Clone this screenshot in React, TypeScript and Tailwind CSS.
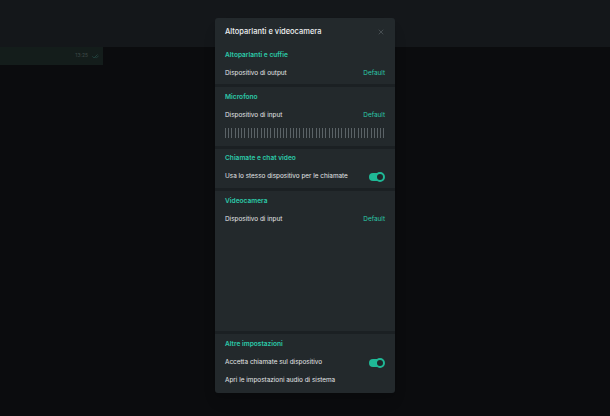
import React from 'react';
import { X, CheckCheck } from 'lucide-react';

function Toggle() {
  return (
    <div className="relative w-[15px] h-[8px] rounded-full bg-[#1fb896] mr-[1px]">
      <div className="absolute right-[-1px] top-[-1px] w-[10px] h-[10px] rounded-full bg-[#1f2629] border-[2px] border-[#1fb896]" />
    </div>
  );
}

function Row({ label, right }: { label: string; right?: React.ReactNode }) {
  return (
    <div className="flex items-center justify-between h-[18px] text-[6.4px] text-[#e3e6e8]">
      <span>{label}</span>
      {right}
    </div>
  );
}

function Heading({ children }: { children: React.ReactNode }) {
  return <div className="h-[14px] mb-[2px] flex items-center text-[6.6px] font-semibold text-[#2ccaa9]">{children}</div>;
}

const Def = <span className="text-[#2ccaa9]">Default</span>;

export default function App() {
  const bars = Array.from({ length: 50 });
  return (
    <div className="relative w-[610px] h-[416px] bg-[#0b0c0e] overflow-hidden" style={{ fontFamily: 'Inter, "Noto Sans", sans-serif' }}>
      <div className="h-[47px] bg-[#14171a]" />
      <div className="w-[103px] h-[18px] bg-[#141d1b] flex items-center justify-end gap-[4px] pr-[4px] text-[5px] text-[#3f4a48]">
        <span>13:25</span>
        <CheckCheck className="w-[7px] h-[7px] text-[#2b5a52]" />
      </div>

      <div className="absolute left-[215px] top-[18px] w-[180px] h-[375px] bg-[#23292c] rounded-[3px] flex flex-col shadow-lg">
        <div className="h-[27px] flex items-center justify-between px-[10px] pt-[1px]">
          <span className="text-[7.5px] font-medium text-[#eef0f1]">Altoparlanti e videocamera</span>
          <X className="w-[8px] h-[8px] text-[#6b7377]" strokeWidth={1.5} />
        </div>

        <div className="px-[10px] pt-[4px] pb-[1px]">
          <Heading>Altoparlanti e cuffie</Heading>
          <Row label="Dispositivo di output" right={Def} />
        </div>
        <div className="h-[3px] bg-[#1b2023]" />

        <div className="px-[10px] pt-[4px] pb-[8px]">
          <Heading>Microfono</Heading>
          <Row label="Dispositivo di input" right={Def} />
          <div className="mt-[3px] h-[10px] flex justify-between">
            {bars.map((_, i) => (
              <div key={i} className="w-[1px] h-full bg-[#5b6367]" />
            ))}
          </div>
        </div>
        <div className="h-[3px] bg-[#1b2023]" />

        <div className="px-[10px] pt-[3px] pb-[2px]">
          <Heading>Chiamate e chat video</Heading>
          <Row label="Usa lo stesso dispositivo per le chiamate" right={<Toggle />} />
        </div>
        <div className="h-[3px] bg-[#1b2023]" />

        <div className="flex-1 px-[10px] pt-[4px]">
          <Heading>Videocamera</Heading>
          <Row label="Dispositivo di input" right={Def} />
        </div>
        <div className="h-[3px] bg-[#1b2023]" />

        <div className="px-[10px] pt-[4px] pb-[3px]">
          <Heading>Altre impostazioni</Heading>
          <Row label="Accetta chiamate sul dispositivo" right={<Toggle />} />
          <Row label="Apri le impostazioni audio di sistema" />
        </div>
      </div>
    </div>
  );
}
